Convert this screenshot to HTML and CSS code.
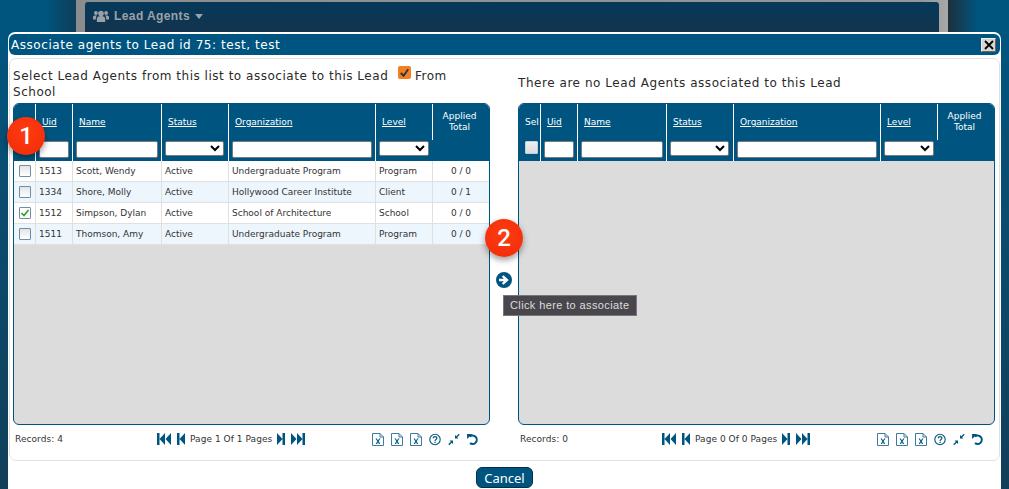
FILE: index.html
```html
<!DOCTYPE html>
<html lang="en">
<head>
<meta charset="utf-8">
<title>Associate agents</title>
<link rel="stylesheet" href="styles.css">
</head>
<body>
<svg class="defs" aria-hidden="true">
  <symbol id="i-first" viewBox="0 0 14 12"><path d="M0 0h2.500v12H0zM8 0v12L2.500 6zM14 0v12L8.500 6z"/></symbol>
  <symbol id="i-prev" viewBox="0 0 8 12"><path d="M0 0h2.500v12H0zM8 0v12L2.500 6z"/></symbol>
  <symbol id="i-next" viewBox="0 0 8 12"><path d="M8 0H5.500v12H8zM0 0v12l5.500-6z"/></symbol>
  <symbol id="i-last" viewBox="0 0 14 12"><path d="M14 0h-2.500v12H14zM6 0v12l5.500-6zM0 0v12l5.500-6z"/></symbol>
  <symbol id="i-xls" viewBox="0 0 12 13"><path d="M.5.500h7.500l3.500 3.500v8.500H.5z M8 .5V4h3.500" fill="#fff" stroke="#3d7ba0" stroke-width="1"/><path d="M3.500 5.500h1.300l1.200 2 1.200-2h1.300L6.700 8.300l1.500 2.700h-1.300L6 9.200 5 11H3.700l1.600-2.700z" fill="#005580"/></symbol>
  <symbol id="i-help" viewBox="0 0 12 12"><circle cx="6" cy="6" r="5.200" fill="none" stroke="#005580" stroke-width="1.100"/><path d="M4.200 4.700C4.200 2.500 7.900 2.600 7.900 4.600 7.900 6 6.100 5.900 6.100 7.400" fill="none" stroke="#005580" stroke-width="1.200"/><path d="M5.400 8.300h1.300v1.300H5.400z" fill="#005580"/></symbol>
  <symbol id="i-shrink" viewBox="0 0 12 12"><path d="M7 5V1.500L8.300 2.800 10.800.3 11.700 1.200 9.200 3.700 10.500 5zM5 7v3.500L3.700 9.200 1.200 11.700.3 10.800 2.800 8.300 1.500 7z"/></symbol>
  <symbol id="i-undo" viewBox="0 0 12 12"><path d="M2.800 3.100A4.200 4.200 0 1 1 3 9.600" fill="none" stroke="#005580" stroke-width="2"/><path d="M0 .6h5.200L.2 5.400z"/></symbol>
</svg>

<header class="backdrop">
  <div class="head-frame">
    <div class="head-panel">
      <svg class="users" viewBox="0 0 16 13" aria-hidden="true"><circle cx="8" cy="3.600" r="2.800"/><circle cx="2.900" cy="3" r="1.900"/><circle cx="13.100" cy="3" r="1.900"/><path d="M3.800 12V9c0-2 1.500-3 4.200-3s4.200 1 4.200 3v3zM0 9.500V7c0-1 .8-1.600 2.900-1.600.5 0 .9 0 1.200.1C3 6.300 2.800 7.500 2.800 9.500zM16 9.500V7c0-1-.8-1.600-2.900-1.600-.5 0-.9 0-1.200.1 1.100.8 1.300 2 1.300 4z"/></svg>
      <span class="head-title">Lead Agents</span>
      <span class="caret"></span>
    </div>
  </div>
</header>

<section class="dialog">
  <div class="titlebar">
    <span>Associate agents to Lead id 75: test, test</span>
    <button class="close" type="button" aria-label="Close"><svg viewBox="0 0 10 10" aria-hidden="true"><path d="M1 1l8 8M9 1l-8 8" stroke="#000" stroke-width="1.800"/></svg></button>
  </div>

  <div class="content">
    <div class="pane">
      <p class="pane-head">Select Lead Agents from this list to associate to this Lead <input class="orange" type="checkbox" checked aria-label="From School"> From<br>School</p>
      <div class="grid">
        <table>
          <colgroup><col class="c1"><col class="c2"><col class="c3"><col class="c4"><col class="c5"><col class="c6"><col class="c7"></colgroup>
          <thead>
            <tr class="titles"><th></th><th><a>Uid</a></th><th><a>Name</a></th><th><a>Status</a></th><th><a>Organization</a></th><th><a>Level</a></th><th class="applied" rowspan="2">Applied<br>Total</th></tr>
            <tr class="filters"><th></th><th><input class="f-text" type="text" aria-label="Uid"></th><th><input class="f-text" type="text" aria-label="Name"></th><th><select class="f-sel" aria-label="Status"></select></th><th><input class="f-text" type="text" aria-label="Organization"></th><th><select class="f-sel" aria-label="Level"></select></th></tr>
          </thead>
          <tbody>
            <tr><td class="chk"><input class="row-check" type="checkbox" aria-label="Select"></td><td>1513</td><td>Scott, Wendy</td><td>Active</td><td>Undergraduate Program</td><td>Program</td><td class="num">0 / 0</td></tr>
            <tr><td class="chk"><input class="row-check" type="checkbox" aria-label="Select"></td><td>1334</td><td>Shore, Molly</td><td>Active</td><td>Hollywood Career Institute</td><td>Client</td><td class="num">0 / 1</td></tr>
            <tr><td class="chk"><input class="row-check" type="checkbox" checked aria-label="Select"></td><td>1512</td><td>Simpson, Dylan</td><td>Active</td><td>School of Architecture</td><td>School</td><td class="num">0 / 0</td></tr>
            <tr><td class="chk"><input class="row-check" type="checkbox" aria-label="Select"></td><td>1511</td><td>Thomson, Amy</td><td>Active</td><td>Undergraduate Program</td><td>Program</td><td class="num">0 / 0</td></tr>
          </tbody>
        </table>
      </div>
      <footer class="pager">
        <span class="records">Records: 4</span>
        <div class="pages">
          <svg class="ico wide"><use href="#i-first"/></svg><svg class="ico narrow"><use href="#i-prev"/></svg>
          <span class="page-text">Page 1 Of 1 Pages</span>
          <svg class="ico narrow"><use href="#i-next"/></svg><svg class="ico wide"><use href="#i-last"/></svg>
        </div>
        <div class="tools">
          <svg class="tool"><use href="#i-xls"/></svg><svg class="tool"><use href="#i-xls"/></svg><svg class="tool"><use href="#i-xls"/></svg><svg class="tool"><use href="#i-help"/></svg><svg class="tool"><use href="#i-shrink"/></svg><svg class="tool"><use href="#i-undo"/></svg>
        </div>
      </footer>
    </div>

    <div class="middle">
      <svg class="go" viewBox="0 0 16 16" aria-hidden="true"><circle cx="8" cy="8" r="8" fill="#005580"/><path d="M3 6.700h4.800L5.900 4.800 7.500 3.200 12.700 8l-5.200 4.800-1.600-1.600 1.900-1.900H3z" fill="#fff"/></svg>
    </div>

    <div class="pane">
      <p class="pane-head single">There are no Lead Agents associated to this Lead</p>
      <div class="grid">
        <table>
          <colgroup><col class="c1"><col class="c2"><col class="c3"><col class="c4"><col class="c5"><col class="c6"><col class="c7"></colgroup>
          <thead>
            <tr class="titles"><th class="sel">Sel</th><th><a>Uid</a></th><th><a>Name</a></th><th><a>Status</a></th><th><a>Organization</a></th><th><a>Level</a></th><th class="applied" rowspan="2">Applied<br>Total</th></tr>
            <tr class="filters"><th class="sel-box"><input class="head-check" type="checkbox" aria-label="Select all"></th><th><input class="f-text" type="text" aria-label="Uid"></th><th><input class="f-text" type="text" aria-label="Name"></th><th><select class="f-sel" aria-label="Status"></select></th><th><input class="f-text" type="text" aria-label="Organization"></th><th><select class="f-sel" aria-label="Level"></select></th></tr>
          </thead>
        </table>
      </div>
      <footer class="pager">
        <span class="records">Records: 0</span>
        <div class="pages">
          <svg class="ico wide"><use href="#i-first"/></svg><svg class="ico narrow"><use href="#i-prev"/></svg>
          <span class="page-text">Page 0 Of 0 Pages</span>
          <svg class="ico narrow"><use href="#i-next"/></svg><svg class="ico wide"><use href="#i-last"/></svg>
        </div>
        <div class="tools">
          <svg class="tool"><use href="#i-xls"/></svg><svg class="tool"><use href="#i-xls"/></svg><svg class="tool"><use href="#i-xls"/></svg><svg class="tool"><use href="#i-help"/></svg><svg class="tool"><use href="#i-shrink"/></svg><svg class="tool"><use href="#i-undo"/></svg>
        </div>
      </footer>
    </div>
  </div>

  <div class="actions"><button class="cancel" type="button">Cancel</button></div>
</section>

<div class="badge badge-one">1</div>
<div class="badge badge-two">2</div>
<div class="tooltip">Click here to associate</div>
</body>
</html>
```

FILE: styles.css
```css
* { box-sizing: border-box; }

html, body {
  height: 100%;
  margin: 0;
  overflow: hidden;
}

body {
  position: relative;
  background:
    linear-gradient(90deg, transparent 45px, #0c3f5b 74px, #1c3240 950px, transparent 978px),
    linear-gradient(180deg, #00557f 0, #00557f 40px, #0a4c70 200px, #113f59 100%);
  font-family: "DejaVu Sans", Verdana, sans-serif;
  color: #333;
}

.defs {
  position: absolute;
  width: 0;
  height: 0;
}

.backdrop {
  padding: 0 61px 0 76px;
}

.head-frame {
  height: 40px;
  padding: 2px 9px 0;
  background: linear-gradient(90deg, #8a8c8e, #94969a 97%, #a8a8a8);
}

.head-panel {
  display: flex;
  align-items: center;
  height: 38px;
  padding: 0 0 10px 8px;
  background: linear-gradient(180deg, #04395a, #17324a);
  border-radius: 3px 3px 0 0;
  color: #9aa2a8;
}

.users {
  width: 16px;
  height: 13px;
  fill: #9aa2a8;
}

.head-title {
  margin-left: 5px;
  font: bold 12px "Liberation Sans", Arial, sans-serif;
  letter-spacing: .4px;
}

.caret {
  margin-left: 5px;
  border: 4.500px solid transparent;
  border-top: 5px solid #9aa2a8;
  border-bottom: 0;
}

.dialog {
  position: absolute;
  left: 8px;
  top: 32px;
  width: 993px;
  height: 470px;
  padding: 2px 1px;
  background: #fff;
  border-radius: 7px;
}

.titlebar {
  display: flex;
  align-items: center;
  justify-content: space-between;
  height: 21px;
  padding: 0 4px 0 2px;
  background: #005580;
  border-radius: 6px;
  color: #fff;
  font-size: 12px;
  letter-spacing: .55px;
}

.close {
  display: flex;
  align-items: center;
  justify-content: center;
  width: 15px;
  height: 14px;
  padding: 0;
  background: #d8d8d2;
  border: 1px solid #888;
  border-color: #eee #666 #666 #eee;
}

.close svg {
  width: 10px;
  height: 10px;
}

.content {
  display: flex;
  height: 403px;
  margin-top: 3px;
  padding: 7px 3px 0;
  border: 1px solid #e0e0e0;
  border-radius: 7px;
}

.pane {
  width: 477px;
  flex: none;
}

.pane-head {
  height: 37px;
  margin: 0;
  color: #2a2a2a;
  font-size: 12px;
  line-height: 16px;
  letter-spacing: .52px;
}

.pane-head.single {
  padding-top: 9px;
  letter-spacing: .55px;
}

.orange {
  appearance: none;
  width: 13px;
  height: 13px;
  margin: 0 0 0 5px;
  vertical-align: 1px;
  border-radius: 2px;
  background: #f27f22 url("data:image/svg+xml,%3Csvg xmlns='http://www.w3.org/2000/svg' viewBox='0 0 14 13'%3E%3Cpath d='M3 6.500l3 3 5-7' fill='none' stroke='%23333' stroke-width='2'/%3E%3C/svg%3E") center/contain no-repeat;
}

.grid {
  height: 322px;
  overflow: hidden;
  background: #dcdcdc;
  border: 1px solid #005580;
  border-radius: 6px;
}

table {
  width: 475px;
  table-layout: fixed;
  border-collapse: separate;
  border-spacing: 0;
  font-size: 9px;
}

.c1 { width: 22px; }
.c2 { width: 37px; }
.c3 { width: 89px; }
.c4 { width: 67px; }
.c5 { width: 147px; }
.c6 { width: 57px; }
.c7 { width: 56px; }

th {
  padding: 0 0 0 3px;
  background: #005580;
  border-right: 1px solid #fff;
  color: #fff;
  font-weight: normal;
  text-align: left;
}

th:last-child {
  border-right: 0;
}

.titles th {
  height: 36px;
  padding: 0 0 0 6px;
}

.titles th a {
  text-decoration: underline;
}

.titles .sel {
  padding-left: 6px;
}

.titles .applied {
  padding: 7px 3px 0 0;
  text-align: center;
  vertical-align: top;
  line-height: 11px;
  border-right: 0;
}

.filters th {
  height: 21px;
  vertical-align: top;
  padding-top: 1px;
}

.f-text {
  display: block;
  width: calc(100% - 3px);
  height: 17px;
  padding: 0 2px;
  background: #fff;
  border: 1px solid #7a7a7a;
  border-radius: 2px;
  font-size: 9px;
}

.f-sel {
  display: block;
  width: calc(100% - 4px);
  height: 15px;
  padding: 0;
  background: #fff;
  border: 1px solid #7a7a7a;
  border-radius: 2px;
  font-size: 9px;
}

.head-check {
  appearance: none;
  display: block;
  width: 13px;
  height: 13px;
  margin: 0 0 0 3px;
  background: linear-gradient(180deg, #f0f0f0, #dcdcdc);
  border: 1px solid #bcd3e2;
  border-radius: 1px;
}

td {
  height: 21px;
  padding: 0 0 0 3px;
  background: #fff;
  border-right: 1px solid #e0e0e0;
  border-bottom: 1px solid #e0e0e0;
  color: #333;
  white-space: nowrap;
  overflow: hidden;
}

td:last-child {
  border-right: 0;
}

tbody tr:nth-child(even) td {
  background: #eef6fd;
}

td.chk {
  padding: 0;
}

td.num {
  padding: 0;
  text-align: center;
}

.row-check {
  appearance: none;
  display: block;
  width: 12px;
  height: 12px;
  margin: 0 0 0 5px;
  background: linear-gradient(180deg, #e4e4e4, #fff);
  border: 1px solid #6f8ea5;
  border-radius: 1px;
}

.row-check:checked {
  background: #fff url("data:image/svg+xml,%3Csvg xmlns='http://www.w3.org/2000/svg' viewBox='0 0 10 10'%3E%3Cpath d='M1.500 5l2.500 2.500 4.500-5.500' fill='none' stroke='%2328a428' stroke-width='1.600'/%3E%3C/svg%3E") center/contain no-repeat;
}

.pager {
  display: grid;
  grid-template-columns: 142px 149px 1fr;
  align-items: center;
  height: 28px;
  padding: 0 0 0 2px;
  font-size: 9px;
  letter-spacing: .05px;
}

.pages {
  display: flex;
  align-items: center;
}

.ico {
  height: 12px;
  fill: #005580;
}

.ico.wide { width: 14px; }
.ico.narrow { width: 8px; }

.pages .ico:nth-child(2) { margin-left: 6px; }
.pages .ico:nth-child(5) { margin-left: 6px; }

.page-text {
  margin: 0 5px;
  white-space: nowrap;
}

.tools {
  display: flex;
  gap: 7px;
  margin-left: 66px;
}

.tool {
  width: 12px;
  height: 13px;
  fill: #005580;
}

.middle {
  flex: none;
  width: 28px;
  display: flex;
  justify-content: center;
  padding-top: 206px;
}

.go {
  width: 16px;
  height: 16px;
}

.actions {
  display: flex;
  justify-content: center;
  margin-top: 6px;
}

.cancel {
  width: 57px;
  height: 21px;
  padding: 0;
  background: #005580;
  border: 1px solid #0a2f45;
  border-radius: 6px;
  color: #fff;
  font: 13px "Noto Sans", sans-serif;
}

.badge {
  position: absolute;
  display: flex;
  align-items: center;
  justify-content: center;
  width: 38px;
  height: 38px;
  border-radius: 50%;
  background: radial-gradient(circle at 50% 40%, #ff3b10, #ee2c08);
  box-shadow: 0 3px 6px rgba(0, 0, 0, .4);
  color: #fff;
  font: 500 24px Roboto, sans-serif;
}

.badge-one {
  left: 7px;
  top: 117px;
}

.badge-two {
  left: 485px;
  top: 219px;
}

.tooltip {
  position: absolute;
  left: 503px;
  top: 295px;
  width: 134px;
  height: 21px;
  padding-left: 6px;
  background: #49474c;
  border: 1px solid #77767a;
  color: #ddd;
  font: 11px/19px "Liberation Sans", Arial, sans-serif;
  letter-spacing: .38px;
  white-space: nowrap;
}
```
